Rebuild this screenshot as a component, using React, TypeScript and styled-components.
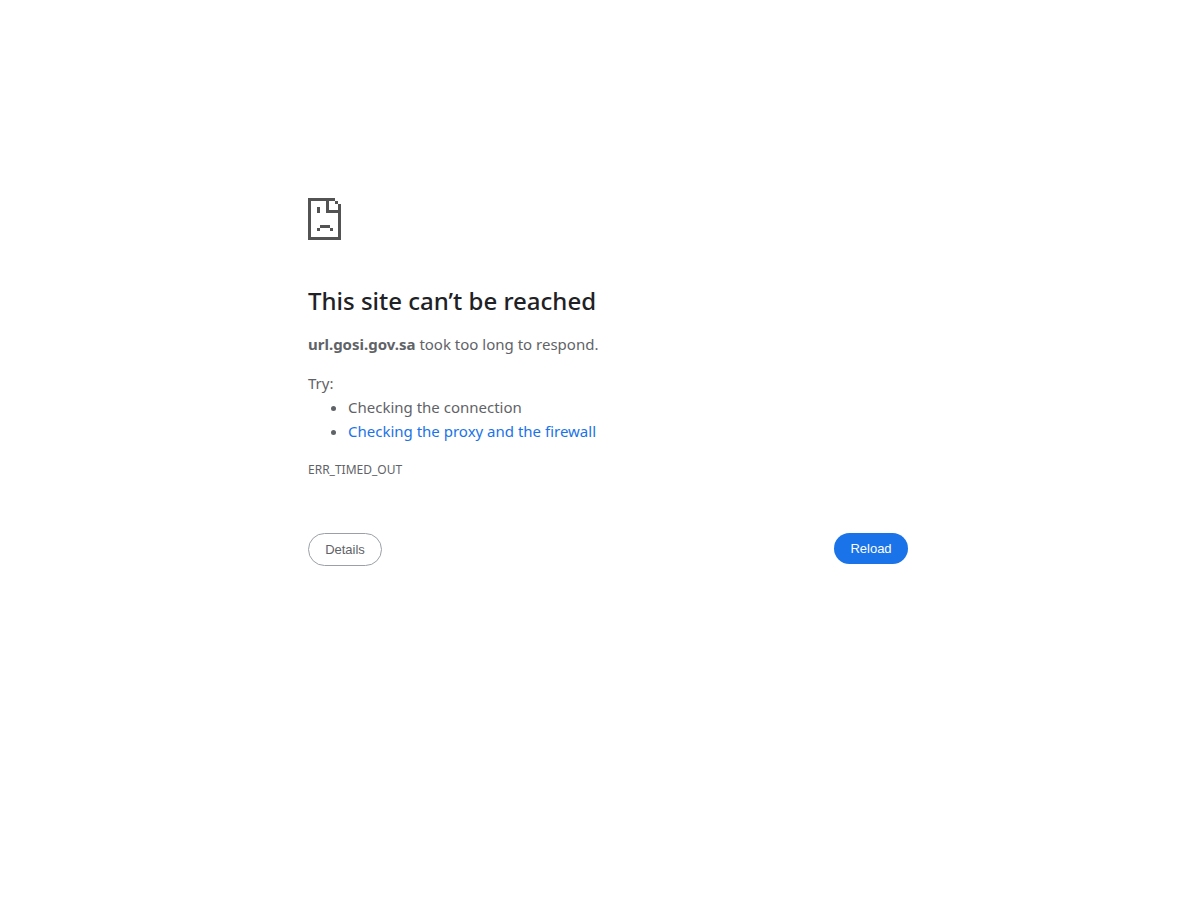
import React from "react";
import styled, { createGlobalStyle } from "styled-components";

const GlobalStyle = createGlobalStyle`
  body {
    margin: 0;
    background: #fff;
    color: #5f6368;
    font-family: "Noto Sans", sans-serif;
    font-size: 15px;
    line-height: 24px;
  }
`;

const Page = styled.div`
  padding: 0 0 0 16px;
`;

const Main = styled.main`
  box-sizing: border-box;
  width: 100%;
  max-width: 600px;
  margin: 0 auto;
  padding-top: calc(14vh + 72px);
`;

const PageIcon = styled.svg`
  display: block;
  width: 33px;
  height: 42px;
  margin-bottom: 46px;
  fill: #535353;
`;

const Title = styled.h1`
  margin: 0 0 16px;
  color: #202124;
  font-size: 24px;
  font-weight: 500;
  line-height: 30px;
`;

const Paragraph = styled.p`
  margin: 0;
`;

const Suggestions = styled.section`
  margin-top: 15px;
`;

const List = styled.ul`
  margin: 0;
  padding-left: 40px;
`;

const Link = styled.a`
  color: #1a73e8;
  text-decoration: none;
`;

const ErrorCode = styled.div`
  margin-top: 18px;
  font-size: 12px;
  line-height: 18px;
`;

const Actions = styled.div`
  display: flex;
  justify-content: space-between;
  align-items: flex-start;
  margin-top: 54px;
`;

const Button = styled.button<{ $primary?: boolean }>`
  box-sizing: border-box;
  min-width: 74px;
  padding: 8px 16px;
  border: ${(p) => (p.$primary ? "0" : "1px solid #9aa0a6")};
  border-radius: 20px;
  background: ${(p) => (p.$primary ? "#1a73e8" : "#fff")};
  color: ${(p) => (p.$primary ? "#fff" : "#5f6368")};
  font-family: "Liberation Sans", Arial, sans-serif;
  font-size: 13px;
  line-height: 15px;
  cursor: pointer;
`;

export default function App() {
  return (
    <Page>
      <GlobalStyle />
      <Main>
        <PageIcon viewBox="0 0 33 42" shapeRendering="crispEdges" aria-hidden="true">
          <path d="M0 0h27v3H0zM0 3h3v36H0zM0 39h33v3H0zM30 6h3v33h-3zM27 3h3v3h-3zM18 3h3v12h-3zM21 12h9v3h-9zM9 9h3v6H9zM12 27h10v3H12zM9 30h3v3H9zM22 30h3v3h-3z" />
        </PageIcon>
        <Title>This site can’t be reached</Title>
        <Paragraph>
          <strong>url.gosi.gov.sa</strong> took too long to respond.
        </Paragraph>
        <Suggestions>
          <Paragraph>Try:</Paragraph>
          <List>
            <li>Checking the connection</li>
            <li>
              <Link href="#buttons">Checking the proxy and the firewall</Link>
            </li>
          </List>
        </Suggestions>
        <ErrorCode>ERR_TIMED_OUT</ErrorCode>
        <Actions id="buttons">
          <Button type="button">Details</Button>
          <Button type="button" $primary>
            Reload
          </Button>
        </Actions>
      </Main>
    </Page>
  );
}
